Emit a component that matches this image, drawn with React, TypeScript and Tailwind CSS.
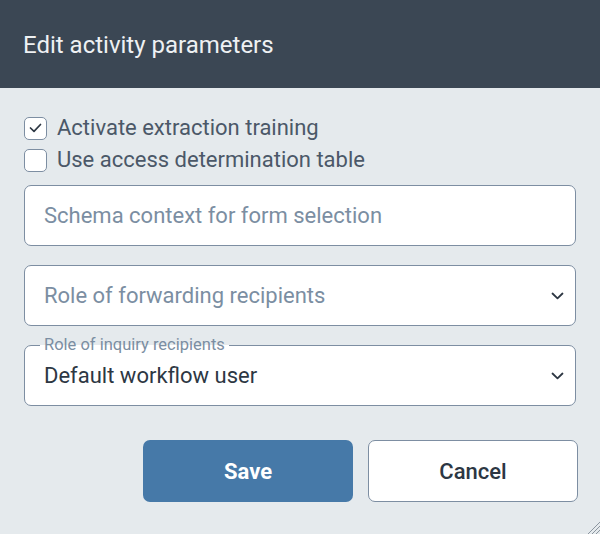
import { useState } from "react";

function Chevron() {
  return (
    <svg width="13" height="8" viewBox="0 0 13 8" className="shrink-0">
      <path d="M1.5 1.5 L6.5 6.3 L11.5 1.5" fill="none" stroke="#2d3743" strokeWidth="1.8" strokeLinecap="round" strokeLinejoin="round" />
    </svg>
  );
}

function Check({ checked, label, onToggle }: { checked: boolean; label: string; onToggle: () => void }) {
  return (
    <label className="flex items-center gap-[10px] h-[32px] cursor-pointer" onClick={onToggle}>
      <span className="w-[23px] h-[23px] rounded-[5px] border border-[#7d8ea2] bg-white flex items-center justify-center shrink-0">
        {checked && (
          <svg width="13" height="10" viewBox="0 0 13 10">
            <path d="M1.5 5 L5 8.3 L11.5 1.5" fill="none" stroke="#2d3743" strokeWidth="1.7" strokeLinecap="round" strokeLinejoin="round" />
          </svg>
        )}
      </span>
      <span className="text-[22px] leading-[26px] text-[#4b5868]">{label}</span>
    </label>
  );
}

export default function App() {
  const [extract, setExtract] = useState(true);
  const [access, setAccess] = useState(false);

  return (
    <div className="w-[600px] h-[534px] flex flex-col bg-[#e5eaed] relative overflow-hidden" style={{ fontFamily: "Roboto, 'Liberation Sans', sans-serif" }}>
      <div className="h-[88px] bg-[#3b4754] flex items-center px-[23px] shrink-0">
        <h2 className="text-[24px] text-[#eef1f3] pt-[1px]">Edit activity parameters</h2>
      </div>

      <div className="flex flex-col px-[24px] pt-[24px]">
        <Check checked={extract} label="Activate extraction training" onToggle={() => setExtract(!extract)} />
        <Check checked={access} label="Use access determination table" onToggle={() => setAccess(!access)} />

        <div className="mt-[9px] h-[61px] rounded-[7px] border border-[#7d8ea2] bg-white flex items-center px-[19px]">
          <span className="text-[22px] text-[#7b8ea2]">Schema context for form selection</span>
        </div>

        <div className="mt-[19px] h-[61px] rounded-[7px] border border-[#7d8ea2] bg-white flex items-center justify-between pl-[19px] pr-[11px]">
          <span className="text-[22px] text-[#7b8ea2]">Role of forwarding recipients</span>
          <Chevron />
        </div>

        <div className="mt-[19px] h-[61px] rounded-[7px] border border-[#7d8ea2] bg-white flex items-center justify-between pl-[19px] pr-[11px] relative">
          <span className="absolute left-[15px] -top-[11px] px-[4px] bg-white text-[16.5px] leading-[20px] text-[#7b8ea2] [background:linear-gradient(to_bottom,#e5eaed_50%,#ffffff_50%)]">
            Role of inquiry recipients
          </span>
          <span className="text-[22px] text-[#2d3743]">Default workflow user</span>
          <Chevron />
        </div>

        <div className="mt-[34px] flex justify-end gap-[15px] -mr-[2px]">
          <button className="w-[210px] h-[62px] rounded-[7px] bg-[#4679a8] text-white text-[22px] font-bold">Save</button>
          <button className="w-[210px] h-[62px] rounded-[7px] bg-white border border-[#7d8ea2] text-[#2d3743] text-[22px] font-medium">Cancel</button>
        </div>
      </div>

      <svg width="14" height="14" viewBox="0 0 14 14" className="absolute right-0 bottom-0">
        <path d="M14 2 L2 14 M14 6 L6 14 M14 10 L10 14" stroke="#8c96a0" strokeWidth="1" />
      </svg>
    </div>
  );
}
